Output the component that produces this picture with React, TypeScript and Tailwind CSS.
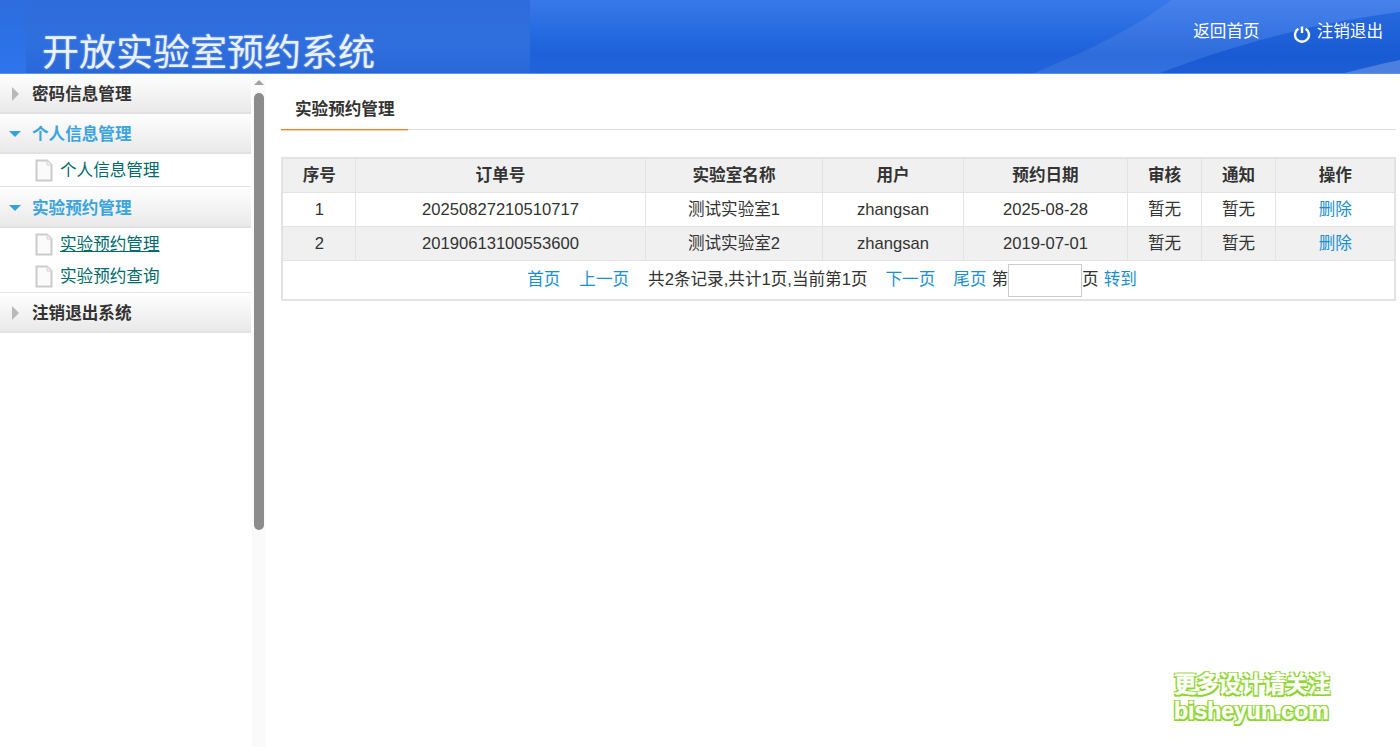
import React from 'react';

const FONT = "font-['Liberation_Sans','Noto_Sans_CJK_SC',sans-serif]";

const rows = [
  { id: 1, order: '20250827210510717', lab: '测试实验室1', user: 'zhangsan', date: '2025-08-28' },
  { id: 2, order: '20190613100553600', lab: '测试实验室2', user: 'zhangsan', date: '2019-07-01' },
];

const heads = ['序号', '订单号', '实验室名称', '用户', '预约日期', '审核', '通知', '操作'];

const cell = 'border border-[#e3e3e3] text-center p-0 pl-[1px]';

function DocIcon() {
  return (
    <svg width="18" height="23" viewBox="0 0 18 23" className="shrink-0">
      <path d="M1.5 1.5H12L16.5 6V21.5H1.5Z" fill="#fbfbfb" stroke="#cbcbcb" strokeWidth="2" />
      <path d="M12 1.5V6H16.5" fill="#efefef" stroke="#d4d4d4" strokeWidth="1" />
    </svg>
  );
}

function MenuHead({ label, open, h }: { label: string; open?: boolean; h: string }) {
  return (
    <div className={`${h} flex items-center border-b-2 border-[#e2e2e2] bg-[linear-gradient(#ffffff,#e9e9e9)] pl-[12px] pt-[2px]`}>
      {open ? (
        <span className="ml-[-3px] mr-[11px] h-0 w-0 border-x-[6.5px] border-t-[6px] border-x-transparent border-t-[#35a2dc]" />
      ) : (
        <span className="mr-[13px] h-0 w-0 border-y-[7px] border-l-[7px] border-y-transparent border-l-[#b9b9b9]" />
      )}
      <span className={`pt-[3px] text-[16.6px] font-bold ${open ? 'text-[#3aa5dc]' : 'text-[#333]'}`}>{label}</span>
    </div>
  );
}

function SubItem({ label, active }: { label: string; active?: boolean }) {
  return (
    <div className="flex h-[32px] items-center pl-[35px]">
      <DocIcon />
      <span className={`ml-[7px] pt-[3px] text-[16.6px] text-[#006a6a] ${active ? 'underline' : ''}`}>{label}</span>
    </div>
  );
}

export default function App() {
  return (
    <div className={`relative h-[747px] w-[1400px] overflow-hidden bg-white text-[#333] ${FONT}`}>
      {/* Banner */}
      <header className="relative flex h-[74px] justify-between overflow-hidden border-b border-[#5b93ea] bg-[linear-gradient(#3878ea,#2367de_55%,#1e60d8_75%,#2064dc)]">
        <svg width="1400" height="73" viewBox="0 0 1400 73" className="absolute left-0 top-0">
          <path d="M1171 0H1400V12C1300 25 1220 50 1160 73H1034C1090 50 1140 25 1171 0Z" fill="#fff" fillOpacity="0.08" />
          <path d="M1160 73C1220 50 1300 25 1400 12V73Z" fill="#0f4fc8" fillOpacity="0.3" />
          <path d="M1344 73C1365 68 1385 63 1400 60V73Z" fill="#fff" fillOpacity="0.22" />
        </svg>
        <div className="absolute inset-y-0 left-0 w-[26px] bg-[linear-gradient(#2c6cde,#2e74ec)]" />
        <div className="absolute inset-y-0 left-[26px] w-[504px] bg-[linear-gradient(#2f6cdb,#2e6edd_60%,#2a68d8)]" />
        <h1 className="relative ml-[42px] mt-[31px] whitespace-nowrap text-[37px] font-normal leading-[46px] text-[#eaf1ff] [text-shadow:0_0_2px_rgba(255,255,255,0.5)]">
          开放实验室预约系统
        </h1>
        <nav className="relative mr-[17px] mt-[22px] flex h-5 items-center text-[16.6px] text-white">
          <span>返回首页</span>
          <svg width="18" height="18" viewBox="0 0 18 18" fill="none" stroke="#fff" strokeWidth="2.4" className="ml-[33px] mr-[6px] mt-[3px]">
            <path d="M5.4 3.8a7 7 0 1 0 7.2 0" />
            <path d="M9 1.5V8" />
          </svg>
          <span>注销退出</span>
        </nav>
      </header>

      <div className="flex h-[673px]">
        {/* Left menu */}
        <aside className="w-[251px] shrink-0">
          <MenuHead label="密码信息管理" h="h-[40px]" />
          <MenuHead label="个人信息管理" open h="h-[40px]" />
          <div className="border-b border-[#e2e2e2]">
            <SubItem label="个人信息管理" />
          </div>
          <MenuHead label="实验预约管理" open h="h-[41px]" />
          <div className="border-b border-[#e2e2e2]">
            <SubItem label="实验预约管理" active />
            <SubItem label="实验预约查询" />
          </div>
          <MenuHead label="注销退出系统" h="h-[40px]" />
        </aside>

        {/* Scrollbar */}
        <div className="ml-px flex w-[14px] shrink-0 flex-col items-center bg-[#fafafa] pt-[6px]">
          <span className="h-0 w-0 border-x-[5px] border-b-[5px] border-x-transparent border-b-[#a3a3a3]" />
          <span className="mt-[8px] h-[437px] w-[10px] rounded-[5px] bg-[#8c8c8c]" />
        </div>

        {/* Content */}
        <main className="ml-[15px] w-[1115px] pt-[15px]">
          <div className="h-[41px] border-b border-[#dcdcdc]">
            <div className="flex h-[41px] w-[127px] flex-col">
              <div className="flex flex-1 items-center pl-[14px] pt-[3px] text-[16.6px] font-bold">实验预约管理</div>
              <div className="h-px bg-[#ff7a1a] shadow-[0_1px_0_#fbd3b5]" />
            </div>
          </div>
          <table className="mt-[27px] w-[1113px] table-fixed border-collapse border-2 border-[#e3e3e3] text-[16.6px]">
            <colgroup>
              <col className="w-[73px]" />
              <col className="w-[290px]" />
              <col className="w-[177px]" />
              <col className="w-[141px]" />
              <col className="w-[164px]" />
              <col className="w-[74px]" />
              <col className="w-[74px]" />
              <col className="w-[120px]" />
            </colgroup>
            <thead>
              <tr className="h-[34px] bg-[#f0f0f0]">
                {heads.map((h) => (
                  <th key={h} className={`${cell} pt-[2px] font-bold`}>{h}</th>
                ))}
              </tr>
            </thead>
            <tbody>
              {rows.map((r, i) => (
                <tr key={r.id} className={`h-[34px] ${i % 2 ? 'bg-[#f0f0f0]' : 'bg-white'}`}>
                  <td className={`${cell} pt-[3px]`}>{r.id}</td>
                  <td className={`${cell} pt-[3px]`}>{r.order}</td>
                  <td className={`${cell} pt-[3px]`}>{r.lab}</td>
                  <td className={`${cell} pt-[3px]`}>{r.user}</td>
                  <td className={`${cell} pt-[3px]`}>{r.date}</td>
                  <td className={`${cell} pt-[3px]`}>暂无</td>
                  <td className={`${cell} pt-[3px]`}>暂无</td>
                  <td className={`${cell} pt-[3px] text-[#1a8fd0]`}>删除</td>
                </tr>
              ))}
              <tr className="h-[39px]">
                <td colSpan={8} className="border border-[#e3e3e3] p-0 align-top">
                  <div className="flex h-[38px] items-center justify-center pr-[13px] pt-[1px]">
                    <a className="text-[#1a8fd0]">首页</a>
                    <a className="ml-[19px] text-[#1a8fd0]">上一页</a>
                    <span className="ml-[19px]">共2条记录,共计1页,当前第1页</span>
                    <a className="ml-[18px] text-[#1a8fd0]">下一页</a>
                    <a className="ml-[18px] text-[#1a8fd0]">尾页</a>
                    <span className="ml-[5px]">第</span>
                    <input className="h-[33px] w-[74px] border border-[#ccc] bg-white" />
                    <span>页</span>
                    <a className="ml-[5px] text-[#1a8fd0]">转到</a>
                  </div>
                </td>
              </tr>
            </tbody>
          </table>
        </main>
      </div>

      {/* Watermark */}
      <div className="absolute left-[1174px] top-[671px] font-bold leading-[27px] text-white [-webkit-text-stroke:0.4px_#fff] [text-shadow:-1.5px_-1.5px_0_#8ed42f,1.5px_-1.5px_0_#8ed42f,-1.5px_1.5px_0_#8ed42f,1.5px_1.5px_0_#8ed42f]">
        <div className="whitespace-nowrap text-[22.3px]">更多设计请关注</div>
        <div className="whitespace-nowrap text-[23px]">bisheyun.com</div>
      </div>
    </div>
  );
}
